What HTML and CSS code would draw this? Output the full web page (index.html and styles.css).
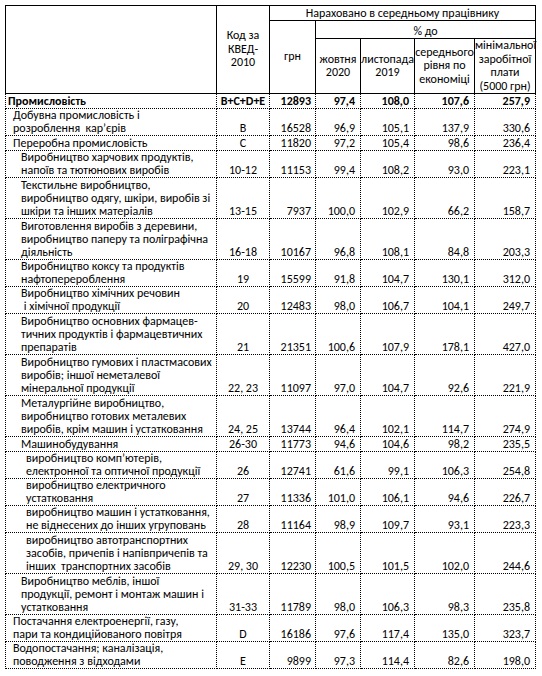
FILE: index.html
```html
<!DOCTYPE html>
<html lang="uk">
  <head>
    <meta charset="UTF-8" />
    <title>Середня заробітна плата</title>
    <link rel="stylesheet" href="styles.css">
  </head>
  <body>
    <table class="stats">
      <colgroup>
        <col class="c-name">
        <col class="c-code">
        <col class="c-uah">
        <col class="c-oct">
        <col class="c-nov">
        <col class="c-avg">
        <col class="c-min">
      </colgroup>
      <thead>
        <tr class="h-top">
          <th rowspan="3"></th>
          <th rowspan="3">Код за<br>КВЕД-<br>2010</th>
          <th colspan="5">Нараховано в середньому працівнику</th>
        </tr>
        <tr class="h-mid">
          <th rowspan="2">грн</th>
          <th colspan="4" class="pct">% до</th>
        </tr>
        <tr class="h-low">
          <th>жовтня<br>2020</th>
          <th>листопада<br>2019</th>
          <th>середнього<br>рівня по<br>економіці</th>
          <th>мінімальної<br>заробітної<br>плати<br>(5000 грн)</th>
        </tr>
      </thead>
      <tbody>
        <tr class="r1 total">
          <td class="lvl0">Промисловість</td><td class="code">B+C+D+E</td>
          <td>12893</td><td>97,4</td><td>108,0</td><td>107,6</td><td>257,9</td>
        </tr>
        <tr class="r2">
          <td class="lvl1">Добувна промисловість і<br>розроблення&nbsp; кар’єрів</td><td class="code">B</td>
          <td>16528</td><td>96,9</td><td>105,1</td><td>137,9</td><td>330,6</td>
        </tr>
        <tr class="r1">
          <td class="lvl1">Переробна промисловість</td><td class="code">C</td>
          <td>11820</td><td>97,2</td><td>105,4</td><td>98,6</td><td>236,4</td>
        </tr>
        <tr class="r2">
          <td class="lvl2">Виробництво харчових продуктів,<br>напоїв та тютюнових виробів</td><td class="code">10-12</td>
          <td>11153</td><td>99,4</td><td>108,2</td><td>93,0</td><td>223,1</td>
        </tr>
        <tr class="r3">
          <td class="lvl2">Текстильне виробництво,<br>виробництво одягу, шкіри, виробів зі<br>шкіри та інших матеріалів</td><td class="code">13-15</td>
          <td>7937</td><td>100,0</td><td>102,9</td><td>66,2</td><td>158,7</td>
        </tr>
        <tr class="r3">
          <td class="lvl2">Виготовлення виробів з деревини,<br>виробництво паперу та поліграфічна<br>діяльність</td><td class="code">16-18</td>
          <td>10167</td><td>96,8</td><td>108,1</td><td>84,8</td><td>203,3</td>
        </tr>
        <tr class="r2">
          <td class="lvl2">Виробництво коксу та продуктів<br>нафтоперероблення</td><td class="code">19</td>
          <td>15599</td><td>91,8</td><td>104,7</td><td>130,1</td><td>312,0</td>
        </tr>
        <tr class="r2">
          <td class="lvl2">Виробництво хімічних речовин<br>&nbsp;і хімічної продукції</td><td class="code">20</td>
          <td>12483</td><td>98,0</td><td>106,7</td><td>104,1</td><td>249,7</td>
        </tr>
        <tr class="r3">
          <td class="lvl2">Виробництво основних фармацев-<br>тичних продуктів і фармацевтичних<br>препаратів</td><td class="code">21</td>
          <td>21351</td><td>100,6</td><td>107,9</td><td>178,1</td><td>427,0</td>
        </tr>
        <tr class="r3">
          <td class="lvl2">Виробництво гумових і пластмасових<br>виробів; іншої неметалевої<br>мінеральної продукції</td><td class="code">22, 23</td>
          <td>11097</td><td>97,0</td><td>104,7</td><td>92,6</td><td>221,9</td>
        </tr>
        <tr class="r3">
          <td class="lvl2">Металургійне виробництво,<br>виробництво готових металевих<br>виробів, крім машин і устатковання</td><td class="code">24, 25</td>
          <td>13744</td><td>96,4</td><td>102,1</td><td>114,7</td><td>274,9</td>
        </tr>
        <tr class="r1">
          <td class="lvl2">Машинобудування</td><td class="code">26-30</td>
          <td>11773</td><td>94,6</td><td>104,6</td><td>98,2</td><td>235,5</td>
        </tr>
        <tr class="r2">
          <td class="lvl3">виробництво комп’ютерів,<br>електронної та оптичної продукції</td><td class="code">26</td>
          <td>12741</td><td>61,6</td><td>99,1</td><td>106,3</td><td>254,8</td>
        </tr>
        <tr class="r2">
          <td class="lvl3">виробництво електричного<br>устатковання</td><td class="code">27</td>
          <td>11336</td><td>101,0</td><td>106,1</td><td>94,6</td><td>226,7</td>
        </tr>
        <tr class="r2">
          <td class="lvl3">виробництво машин і устатковання,<br>не віднесених до інших угруповань</td><td class="code">28</td>
          <td>11164</td><td>98,9</td><td>109,7</td><td>93,1</td><td>223,3</td>
        </tr>
        <tr class="r3">
          <td class="lvl3">виробництво автотранспортних<br>засобів, причепів і напівпричепів та<br>інших&nbsp; транспортних засобів</td><td class="code">29, 30</td>
          <td>12230</td><td>100,5</td><td>101,5</td><td>102,0</td><td>244,6</td>
        </tr>
        <tr class="r3">
          <td class="lvl2">Виробництво меблів, іншої<br>продукції, ремонт і монтаж машин і<br>устатковання</td><td class="code">31-33</td>
          <td>11789</td><td>98,0</td><td>106,3</td><td>98,3</td><td>235,8</td>
        </tr>
        <tr class="r2">
          <td class="lvl1">Постачання електроенергії, газу,<br>пари та кондиційованого повітря</td><td class="code">D</td>
          <td>16186</td><td>97,6</td><td>117,4</td><td>135,0</td><td>323,7</td>
        </tr>
        <tr class="r2">
          <td class="lvl1">Водопостачання; каналізація,<br>поводження з відходами</td><td class="code">E</td>
          <td>9899</td><td>97,3</td><td>114,4</td><td>82,6</td><td>198,0</td>
        </tr>
      </tbody>
    </table>
  </body>
</html>
```

FILE: styles.css
```css
body {
  margin: 0;
  padding: 5px;
  background: #ffffff;
  color: #000000;
  font-family: Carlito, Lato, "Liberation Sans", sans-serif;
  font-size: 12px;
}

.stats {
  border-collapse: collapse;
  table-layout: fixed;
  width: 530px;
  line-height: 13px;
}

.c-name { width: 211px; }
.c-code { width: 53px; }
.c-uah { width: 46px; }
.c-oct { width: 45px; }
.c-nov { width: 54px; }
.c-avg { width: 60px; }
.c-min { width: 61px; }

th {
  font-weight: normal;
  border: 1px solid #000000;
  padding: 0;
  text-align: center;
  vertical-align: middle;
  white-space: nowrap;
  line-height: 13.5px;
}

.h-top { height: 15px; }
.h-mid { height: 18px; }
.h-low { height: 53px; }

.h-top th:last-child,
.pct {
  vertical-align: bottom;
}

td {
  border: 1px dotted #000000;
  padding: 0 5px 0 0;
  text-align: right;
  vertical-align: bottom;
  white-space: nowrap;
}

td:nth-child(3) {
  padding-right: 4px;
}

td.code {
  text-align: center;
  padding: 0;
}

.r1 { height: 15px; }
.r2 { height: 27px; }
.r3 { height: 41px; }

.total td {
  font-weight: bold;
}

.lvl0 { text-align: left; padding-left: 2px; }
.lvl1 { text-align: left; padding-left: 7px; }
.lvl2 { text-align: left; padding-left: 15px; }
.lvl3 { text-align: left; padding-left: 20px; }
```
